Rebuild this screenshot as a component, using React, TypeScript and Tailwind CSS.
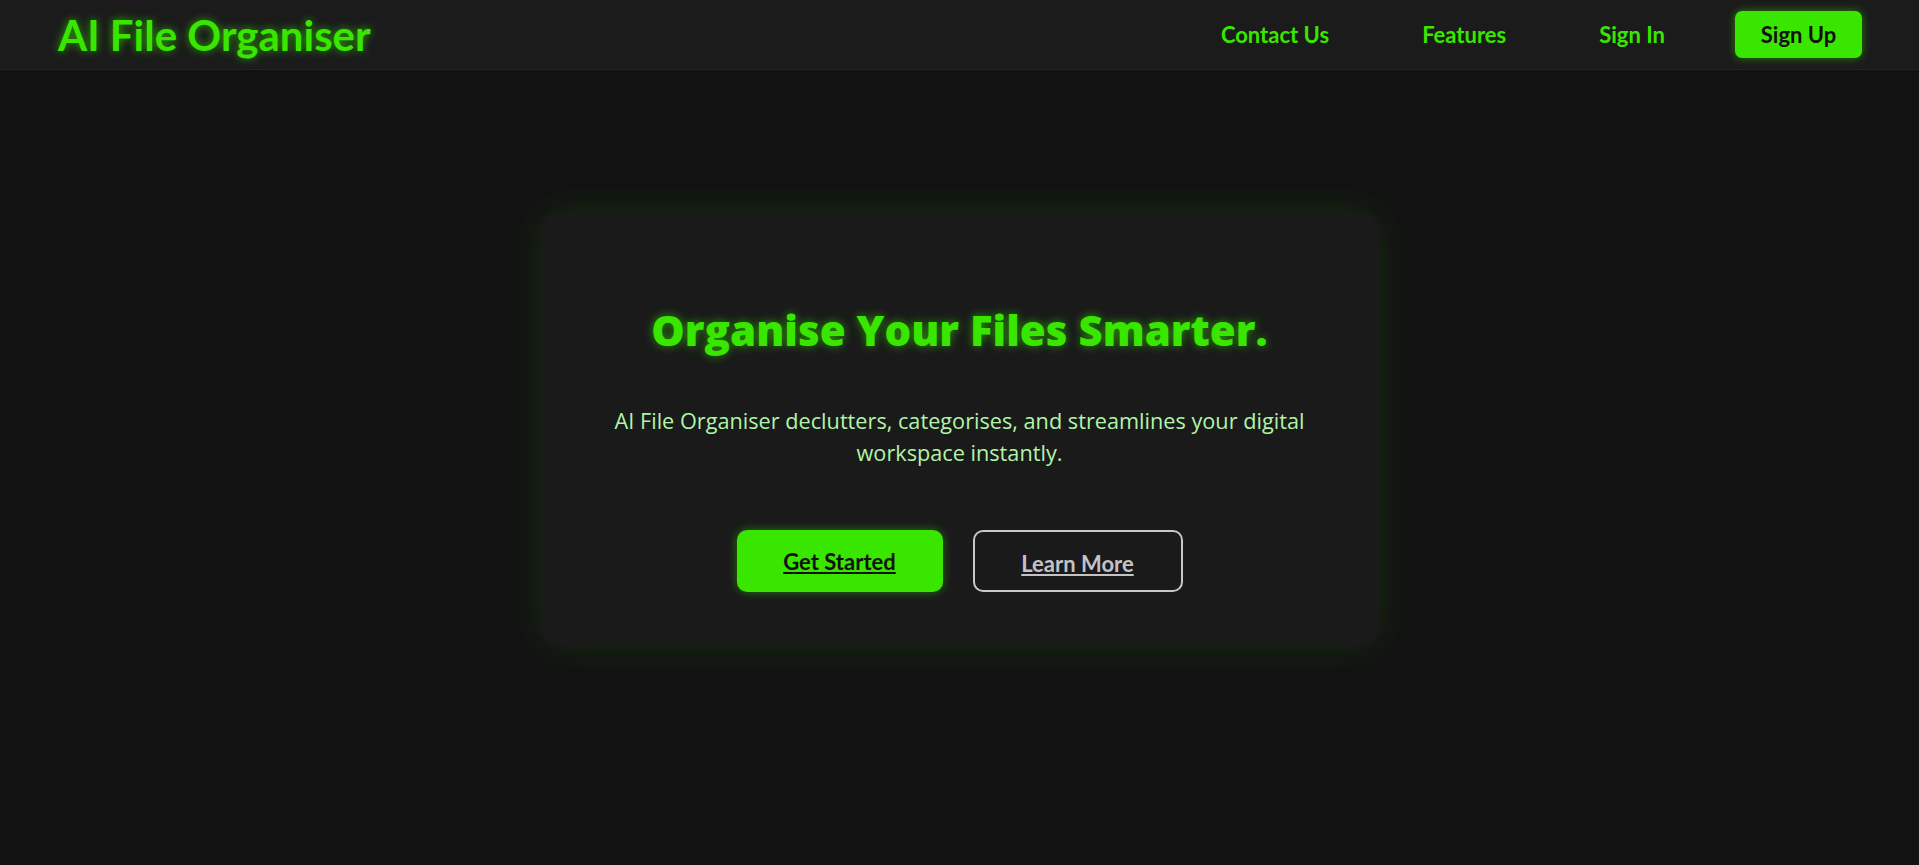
import React from "react";

export default function App() {
  const font = { fontFamily: '"Lato", "Open Sans", "Liberation Sans", sans-serif' };
  return (
    <div className="min-h-[865px] bg-[#121212] text-white" style={font}>
      <nav className="h-[70px] bg-[#1b1b1b] border-b border-[#232323] flex items-center justify-between pl-[58px] pr-[57px]">
        <div className="text-[42px] font-bold text-[#39e600] [text-shadow:0_0_8px_rgba(57,230,0,0.7)] leading-none">
          AI File Organiser
        </div>
        <div className="flex items-center">
          <a className="text-[22px] font-bold text-[#39e600]">Contact Us</a>
          <a className="ml-[93px] text-[22px] font-bold text-[#39e600]">Features</a>
          <a className="ml-[93px] text-[22px] font-bold text-[#39e600]">Sign In</a>
          <button className="ml-[70px] w-[127px] h-[47px] rounded-[7px] bg-[#39e600] text-[#111] text-[22px] font-bold shadow-[0_0_8px_rgba(57,230,0,0.5)]">
            Sign Up
          </button>
        </div>
      </nav>
      <main className="flex justify-center pt-[141px]">
        <div className="w-[838px] h-[435px] rounded-[20px] bg-[#1a1a1a] shadow-[0_0_40px_rgba(57,230,0,0.12)] flex flex-col items-center pt-[91px]">
          <h1
            className="text-[42px] font-extrabold text-[#39e600] leading-[56px] [text-shadow:0_0_10px_rgba(57,230,0,0.6)]"
            style={{ fontFamily: '"Open Sans", "Lato", sans-serif' }}
          >
            Organise Your Files Smarter.
          </h1>
          <p
            className="mt-[47px] w-[720px] text-center text-[21.7px] leading-[32px] text-[#b0f5a8]"
            style={{ fontFamily: '"Open Sans", "Lato", sans-serif' }}
          >
            AI File Organiser declutters, categorises, and streamlines your digital workspace instantly.
          </p>
          <div className="mt-[61px] flex gap-[30px]">
            <button className="w-[206px] h-[62px] rounded-[10px] bg-[#39e600] text-[#111] text-[22px] font-bold underline shadow-[0_0_10px_rgba(57,230,0,0.45)]">
              Get Started
            </button>
            <button className="w-[210px] h-[62px] rounded-[10px] border-2 border-[#c8c8c8] text-[#c2c2c8] text-[22px] font-bold underline pt-[4px]">
              Learn More
            </button>
          </div>
        </div>
      </main>
    </div>
  );
}
